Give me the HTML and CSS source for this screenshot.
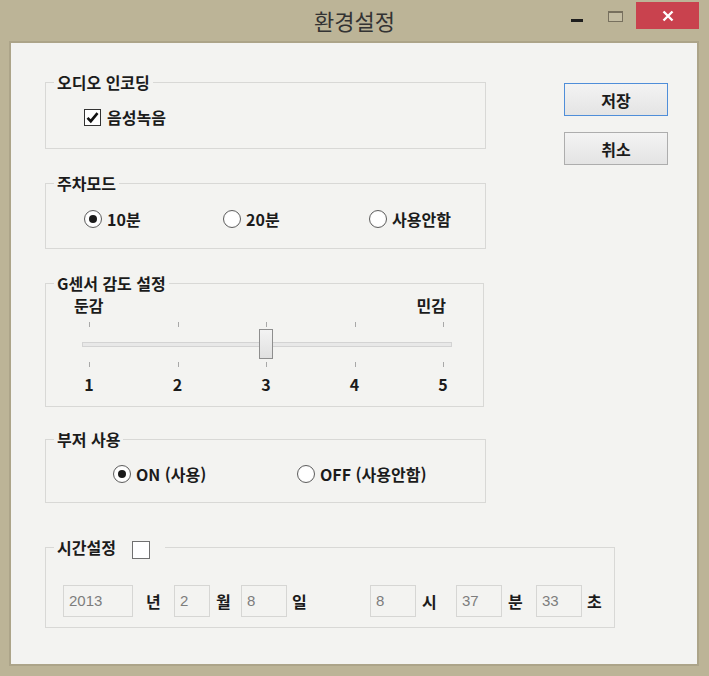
FILE: index.html
```html
<!DOCTYPE html>
<html lang="ko">
<head>
<meta charset="utf-8">
<title>환경설정</title>
<link rel="stylesheet" href="styles.css">
</head>
<body>
<div class="window">
  <div class="titlebar">
    <div></div>
    <div class="title">환경설정</div>
    <div class="controls">
      <span class="min"></span>
      <span class="max"></span>
      <span class="close"><svg width="12" height="12" viewBox="0 0 12 12"><path d="M1.5 1.5 L10.5 10.5 M10.5 1.5 L1.5 10.5" stroke="#fff" stroke-width="2.4" fill="none"/></svg></span>
    </div>
  </div>
  <div class="client">
    <div class="top">
      <div class="groups">
        <fieldset class="g g1">
          <legend>오디오 인코딩</legend>
          <div class="row r1">
            <span class="opt"><span class="chk"><svg width="13" height="13" viewBox="0 0 13 13"><path d="M1.5 6.8 L4.8 10.2 L11.5 2.2" stroke="#111" stroke-width="2.6" fill="none"/></svg></span>음성녹음</span>
          </div>
        </fieldset>
        <fieldset class="g g2">
          <legend>주차모드</legend>
          <div class="row r2">
            <span class="opt w139"><span class="radio on"></span>10분</span>
            <span class="opt w146"><span class="radio"></span>20분</span>
            <span class="opt"><span class="radio"></span>사용안함</span>
          </div>
        </fieldset>
        <fieldset class="g g3">
          <legend>G센서 감도 설정</legend>
          <div class="labels"><span>둔감</span><span>민감</span></div>
          <div class="ticks"><i></i><i></i><i></i><i></i><i></i></div>
          <div class="slider">
            <div class="track"></div>
            <div class="thumb"></div>
          </div>
          <div class="ticks bottom"><i></i><i></i><i></i><i></i><i></i></div>
          <div class="nums"><span>1</span><span>2</span><span>3</span><span>4</span><span>5</span></div>
        </fieldset>
        <fieldset class="g g4">
          <legend>부저 사용</legend>
          <div class="row r4">
            <span class="opt w184"><span class="radio on"></span>ON (사용)</span>
            <span class="opt"><span class="radio"></span>OFF (사용안함)</span>
          </div>
        </fieldset>
      </div>
      <div class="buttons">
        <button class="btn primary">저장</button>
        <button class="btn">취소</button>
      </div>
    </div>
    <fieldset class="g g5">
      <legend><span>시간설정</span><span class="chk off"></span></legend>
      <div class="row r5">
        <span class="field w70">2013</span><span class="unit u1">년</span>
        <span class="field w36">2</span><span class="unit u2">월</span>
        <span class="field w46">8</span><span class="unit u3">일</span>
        <span class="field w46">8</span><span class="unit u4">시</span>
        <span class="field w46">37</span><span class="unit u5">분</span>
        <span class="field w46">33</span><span class="unit u6">초</span>
      </div>
    </fieldset>
  </div>
</div>
</body>
</html>
```

FILE: styles.css
```css
* { box-sizing: border-box; }
html, body { margin: 0; padding: 0; }
body {
  font-family: "Noto Sans CJK KR", "Noto Sans", sans-serif;
  color: #1b1b1b;
  background: #bcb497;
}
.window {
  width: 709px;
  height: 676px;
  background: #bcb497;
  display: flex;
  flex-direction: column;
  overflow: hidden;
}
.titlebar {
  height: 43px;
  flex: none;
  display: grid;
  grid-template-columns: 1fr auto 1fr;
}
.title {
  font-size: 22px;
  line-height: 28px;
  padding-top: 6px;
  color: #333;
}
.controls {
  display: flex;
  justify-content: flex-end;
  align-items: flex-start;
}
.min {
  width: 12px;
  height: 3px;
  margin-top: 19px;
  background: #1e1e1e;
}
.max {
  width: 15px;
  height: 11px;
  margin-top: 11px;
  margin-left: 25px;
  border: 1px solid #77705e;
  border-top-width: 2px;
  background: #c4bda3;
}
.close {
  width: 63px;
  height: 27px;
  margin: 2px 10px 0 13px;
  background: #c9424e;
  display: flex;
  align-items: center;
  justify-content: center;
}
.client {
  margin: 0 12px 12px 11px;
  flex: 1;
  background: #f3f3f1;
  box-shadow: 0 0 0 2px #aca489;
  padding: 29px 0 0 34px;
}
.top {
  display: flex;
  align-items: flex-start;
}
.groups {
  width: 441px;
  display: flex;
  flex-direction: column;
}
fieldset.g {
  margin: 0;
  padding: 0;
  min-width: 0;
  border: 1px solid #d8d8d6;
  width: 441px;
}
legend {
  margin-left: 8px;
  padding: 0 3px;
  font-size: 16px;
  line-height: 20px;
  font-weight: bold;
}
fieldset.g2 { margin-top: 24px; }
fieldset.g3 { margin-top: 24px; width: 439px; padding-bottom: 12px; }
fieldset.g4 { margin-top: 22px; }
fieldset.g5 { margin-top: 34px; width: 570px; }

.row {
  display: flex;
  align-items: center;
  font-size: 16px;
  line-height: 20px;
  font-weight: bold;
}
.r1 { padding: 15px 0 21px 38px; }
.r2 { padding: 16px 0 19px 38px; }
.r4 { padding: 15px 0 18px 67px; }
.r5 { padding: 28px 0 10px 17px; }

.opt {
  display: flex;
  align-items: center;
}
.w139 { width: 139px; }
.w146 { width: 146px; }
.w184 { width: 184px; }

.chk {
  width: 17px;
  height: 17px;
  border: 1px solid #333;
  background: #fff;
  margin-right: 6px;
  display: flex;
  align-items: center;
  justify-content: center;
}
.chk.off {
  width: 18px;
  height: 18px;
  border-color: #707070;
  margin: 0 0 0 16px;
}
.g5 legend {
  display: flex;
  align-items: center;
  padding-right: 15px;
}
.g5 legend .chk { position: relative; top: 3px; }

.radio {
  width: 18px;
  height: 18px;
  border-radius: 50%;
  border: 1px solid #5e5e5e;
  background: radial-gradient(circle, #ffffff 55%, #ececec 100%);
  margin-right: 5px;
  display: flex;
  align-items: center;
  justify-content: center;
}
.radio.on::after {
  content: "";
  width: 8px;
  height: 8px;
  border-radius: 50%;
  background: #1a1a1a;
}

.labels {
  display: flex;
  justify-content: space-between;
  margin: 3px 0 0 28px;
  width: 372px;
  font-size: 16px;
  line-height: 18px;
  font-weight: bold;
}
.ticks {
  display: flex;
  justify-content: space-between;
  margin: 8px 0 0 43px;
  width: 355px;
  height: 5px;
}
.ticks i {
  width: 1px;
  height: 5px;
  background: #a8a8a8;
}
.ticks.bottom { margin-top: 3px; }
.slider {
  position: relative;
  margin: 2px 0 0 36px;
  padding-top: 13px;
  width: 370px;
  height: 30px;
}
.track {
  height: 5px;
  border: 1px solid #d3d3d3;
  background: #e8e8e8;
}
.thumb {
  position: absolute;
  left: 177px;
  top: 0;
  width: 14px;
  height: 30px;
  border: 1px solid #8e8e8e;
  background: linear-gradient(#f3f3f3, #e0e0e0);
}
.nums {
  display: flex;
  justify-content: space-between;
  margin: 7px 0 0 33px;
  width: 374px;
  font-size: 16px;
  line-height: 20px;
  font-weight: bold;
}
.nums span { width: 20px; text-align: center; }

.buttons {
  margin: 11px 0 0 78px;
  display: flex;
  flex-direction: column;
  gap: 16px;
}
.btn {
  width: 104px;
  height: 33px;
  border: 1px solid #adadad;
  background: linear-gradient(#f3f3f3, #e4e4e4);
  font-family: "Noto Sans CJK KR", "Noto Sans", sans-serif;
  font-size: 16px;
  font-weight: bold;
  color: #1b1b1b;
  padding: 0;
}
.btn.primary { border-color: #4f8ed9; }

.field {
  height: 32px;
  border: 1px solid #d6d6d4;
  background: #f3f3f1;
  font-family: "Liberation Sans", sans-serif;
  font-weight: normal;
  font-size: 15px;
  color: #7d7d7d;
  padding-left: 5px;
  display: flex;
  align-items: center;
}
.w70 { width: 70px; }
.w36 { width: 36px; }
.w46 { width: 46px; }
.u1 { width: 41px; padding-left: 13px; }
.u2 { width: 31px; padding-left: 6px; }
.u3 { width: 83px; padding-left: 5px; }
.u4 { width: 40px; padding-left: 6px; }
.u5 { width: 34px; padding-left: 6px; }
.u6 { padding-left: 5px; }
```
